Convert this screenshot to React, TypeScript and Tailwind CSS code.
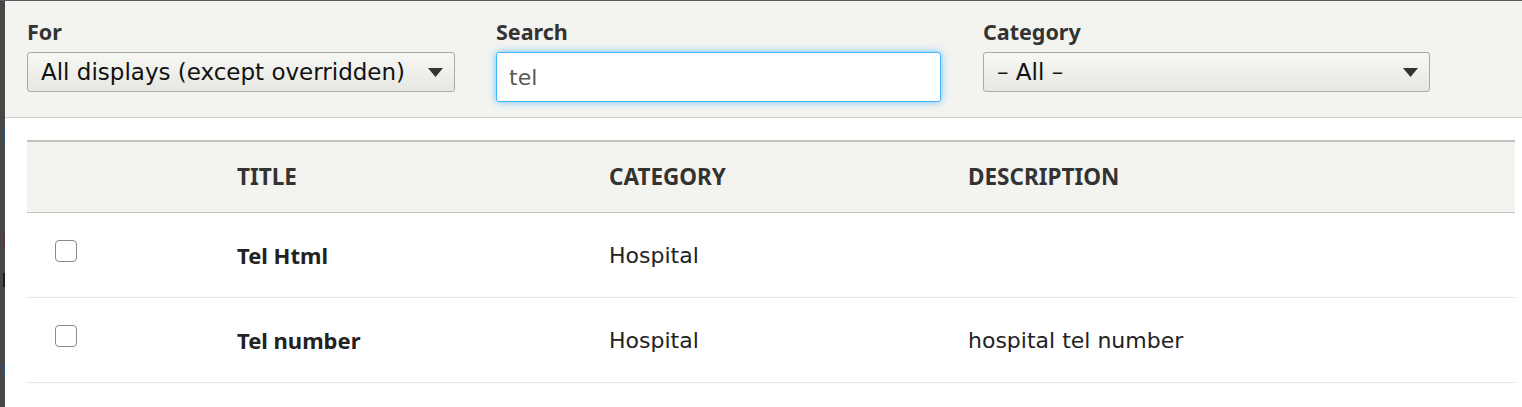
import React from "react"

const labelCls = "block text-[21.5px] font-bold leading-[26px] text-[#333] mb-[7px] font-['Noto_Sans',sans-serif]"
const selectCls = "flex items-center justify-between h-[40px] border border-[#a9a9a6] rounded-[3px] bg-linear-to-b from-[#f7f7f4] to-[#e7e7e2] pl-[13px] pr-[11px] text-[23px] leading-[38px] text-[#111] font-['DejaVu_Sans',sans-serif]"
const headCls = "text-[22.5px] font-bold text-[#333] font-['Noto_Sans',sans-serif]"
const cellCls = "text-[22px] text-[#222] font-['DejaVu_Sans',sans-serif]"

const Arrow = () => (
    <svg width="15" height="9" viewBox="0 0 15 9" className="shrink-0">
        <polygon points="0,0 15,0 7.5,9" fill="#333" />
    </svg>
)

const Checkbox = () => (
    <div className="ml-[28px] mb-[8px] w-[22px] h-[22px] rounded-[4px] border-[1.5px] border-[#8a8a8a] bg-white"></div>
)

const rows = [
    { title: 'Tel Html', category: 'Hospital', description: '' },
    { title: 'Tel number', category: 'Hospital', description: 'hospital tel number' },
]

export default function App() {
    return <div className="flex w-full h-[407px] border-t border-[#5a5a5a] bg-white overflow-hidden">
        {/* page behind the dialog, barely visible on the left */}
        <div className="w-[5px] shrink-0 bg-[#474747] flex flex-col items-end">
            <div className="h-[127px]"></div>
            <div className="w-[2px] h-[15px] bg-[#274d78]"></div>
            <div className="h-[90px]"></div>
            <div className="w-[2px] h-[17px] bg-[#5e3a3a]"></div>
            <div className="h-[23px]"></div>
            <div className="w-[2px] h-[14px] bg-[#1c1c1c]"></div>
            <div className="h-[78px]"></div>
            <div className="w-[2px] h-[10px] bg-[#21528a]"></div>
        </div>
        <div className="flex-1 flex flex-col">
            <div className="h-[117px] shrink-0 bg-[#f3f3ef] border-b border-[#cdcdc9] pt-[18px] pl-[22px] flex gap-[41px]">
                <div className="w-[428px]">
                    <label className={labelCls}>For</label>
                    <div className={selectCls}>
                        <span>All displays (except overridden)</span>
                        <Arrow />
                    </div>
                </div>
                <div className="w-[445px]">
                    <label className={labelCls}>Search</label>
                    <input
                        defaultValue="tel"
                        className="w-full h-[50px] bg-white border border-[#40b6ff] rounded-[3px] shadow-[0_0_7px_rgba(64,182,255,0.8)] px-[12px] text-[22px] text-[#595959] outline-none font-['DejaVu_Sans',sans-serif]"
                    />
                </div>
                <div className="w-[447px] ml-[1px]">
                    <label className={labelCls}>Category</label>
                    <div className={selectCls}>
                        <span>– All –</span>
                        <Arrow />
                    </div>
                </div>
            </div>

            <div className="mt-[22px] ml-[22px] mr-[7px]">
                <div className="grid grid-cols-[210px_372px_359px_1fr] items-center h-[73px] pb-[1px] bg-[#f3f3ef] border-t-2 border-b border-[#c1c1bc]">
                    <div></div>
                    <div className={headCls}>TITLE</div>
                    <div className={headCls}>CATEGORY</div>
                    <div className={headCls}>DESCRIPTION</div>
                </div>
                {rows.map(r => (
                    <div key={r.title} className="grid grid-cols-[210px_372px_359px_1fr] items-center h-[85px] border-b border-[#e6e5e0]">
                        <Checkbox />
                        <div className="text-[22px] font-bold text-[#222] font-['Noto_Sans',sans-serif]">{r.title}</div>
                        <div className={cellCls}>{r.category}</div>
                        <div className={cellCls}>{r.description}</div>
                    </div>
                ))}
            </div>
        </div>
    </div>
}
